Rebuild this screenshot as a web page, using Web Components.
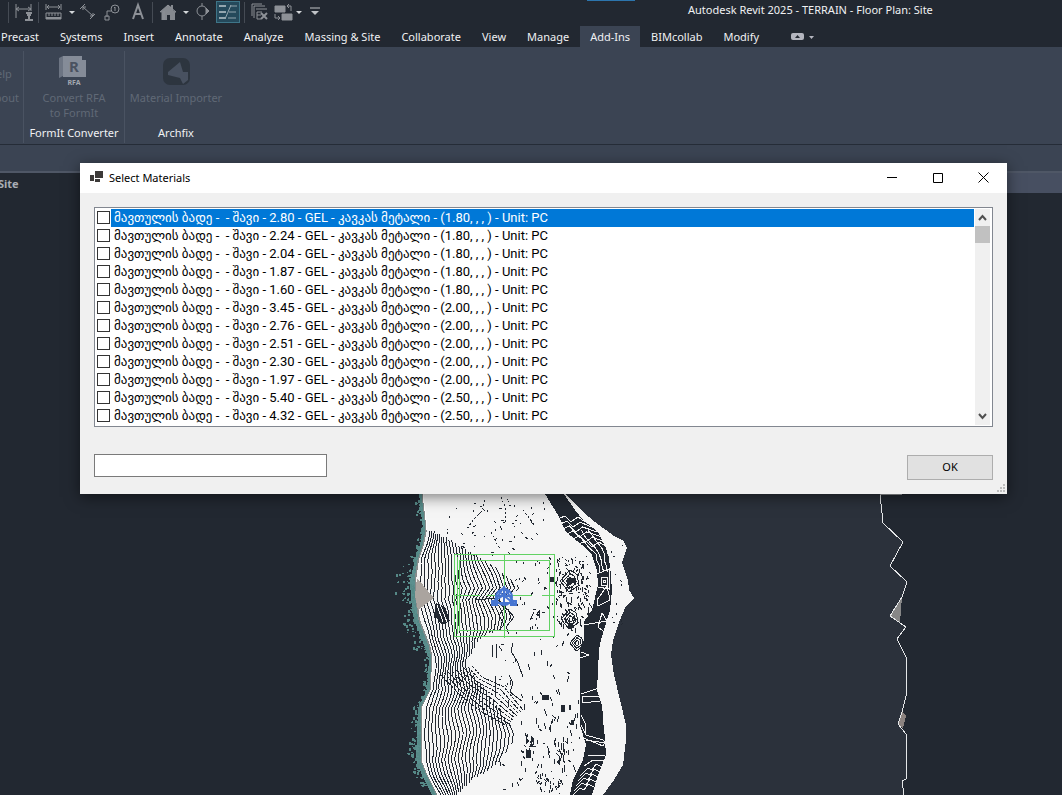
<!DOCTYPE html>
<html lang="en">
<head>
<meta charset="utf-8">
<title>Autodesk Revit 2025 - TERRAIN - Floor Plan: Site</title>
<style>
  html, body { height: 100%; margin: 0; }
  body {
    overflow: hidden;
    background: #222831;
    color: #f0f1f3;
    font: 11px/15px "Noto Sans", "DejaVu Sans", sans-serif;
  }
</style>
</head>
<body>
<revit-app></revit-app>

<script>
const icons = {
  alignedDim: '<path d="M2 2v14M17 2v7M2 7h15M5 5L2 7l3 2M14 5l3 2-3 2"/><path d="M12 11h6M15 11v6M13 13h4M11 18h8" stroke-width="2"/>',
  ruler: '<path d="M2 2v6M17 2v6M3 5h13M5 3L3 5l2 2M14 3l2 2-2 2"/><path d="M2 11h15v6H2zM5 11v3M8 11v3M11 11v3M14 11v3"/><path d="M2 16h15" stroke-width="2"/>',
  measure: '<path d="M5 5l10 9M2 7l5-5M12 17l5-5M5 5v3M5 5h3M15 14v-3M15 14h-3"/>',
  tag: '<circle cx="13" cy="7" r="4"/><path d="M9 9H5v6M3 14h4v4H3zM12 6l1-1v4"/>',
  text: '<path d="M5 17L10 3l5 14M7 12h6" stroke-width="2"/>',
  home: '<path d="M2 10l8-7 3 2V3h2v5l3 2-1 1v7h-5v-5H9v5H4v-7z" fill="#85898f" stroke="none"/><path d="M2 10l8-7 8 7M4 11v7M6 9v9"/>',
  section: '<circle cx="10" cy="9" r="5"/><path d="M10 1v3M10 14v4"/><path d="M14 6l3 3-3 3z" fill="#8d9197"/>',
  thinLines: '<path d="M1 4h7M1 10h7M1 16h7" stroke-width="2" stroke="#94a6af"/><path d="M12 4h7M11 10h7M10 16h8M13 3L7 17" stroke="#94a6af"/>',
  closeInactive: '<path d="M3 14V2h10M5 16V4h11M7 7h11M8 10h5M8 13h4M8 17h4M8 10v7"/><path d="M12 11l6 6M18 11l-6 6" stroke-width="2"/>',
  switchWindow: '<path d="M2 4h10v6H2zM9 12h10v6H9z" fill="#8d9197"/><path d="M14 4h4v5M16 2l-2 2 2 2M2 12v4h5M5 14l2 2-2 2"/>',
  caret: '<path d="M7 9h6l-3 3z" fill="#d4d7da" stroke="none"/>',
  menu: '<path d="M5 6h10" stroke="#c0c3c7"/><path d="M6 9h8l-4 4z" fill="#c0c3c7" stroke="none"/>'
};

class QuickButton extends HTMLElement {
  constructor() {
    super();
    this.attachShadow({ mode: 'open' });
  }

  connectedCallback() {
    const name = this.getAttribute('icon');
    this.shadowRoot.innerHTML = `
      <style>
        :host { display: flex; flex: 0 0 auto; width: 24px; }
        :host([wide]) { width: 28px; }
        :host([slim]) { width: 8px; }
        :host([active]) { margin: 0 2px; }
        button {
          display: flex; align-items: center; justify-content: center;
          width: 100%; height: 22px; padding: 0; border: 0;
          background: none; overflow: visible;
        }
        :host([active]) button { background: #25495b; border: 1px solid #3e7588; }
        svg { flex: 0 0 auto; width: 20px; height: 20px; fill: none; stroke: #8d9197; }
      </style>
      <button type="button" aria-label="${name}">
        <svg viewBox="0 0 20 20">${icons[name]}</svg>
      </button>
    `;
  }
}
customElements.define('quick-button', QuickButton);

class TitleBar extends HTMLElement {
  constructor() {
    super();
    this.attachShadow({ mode: 'open' });
    this.shadowRoot.innerHTML = `
      <style>
        :host { display: flex; height: 26px; background: #222831; }
        nav { display: flex; align-items: center; flex: 0 0 auto; height: 24px; padding-left: 8px; }
        hr { width: 1px; height: 21px; margin: 0 1px 0 0; border: 0; background: #454b54; }
        hr.wide { margin: 0 2px; }
        .search { width: 48px; height: 1px; margin-left: 260px; background: #2c75ad; }
        h1 { margin: 2px 0 0 53px; font: inherit; white-space: nowrap; }
      </style>
      <nav aria-label="Quick access">
        <hr>
        <quick-button icon="alignedDim" wide></quick-button>
        <hr>
        <quick-button icon="ruler" wide></quick-button>
        <quick-button icon="caret" slim></quick-button>
        <quick-button icon="measure"></quick-button>
        <quick-button icon="tag"></quick-button>
        <quick-button icon="text" wide></quick-button>
        <hr>
        <quick-button icon="home" wide></quick-button>
        <quick-button icon="caret" slim></quick-button>
        <quick-button icon="section"></quick-button>
        <quick-button icon="thinLines" active></quick-button>
        <hr class="wide">
        <quick-button icon="closeInactive"></quick-button>
        <quick-button icon="switchWindow"></quick-button>
        <quick-button icon="caret" slim></quick-button>
        <quick-button icon="menu"></quick-button>
      </nav>
      <div class="search"></div>
      <h1><slot></slot></h1>
    `;
  }
}
customElements.define('title-bar', TitleBar);

class RibbonTabs extends HTMLElement {
  constructor() {
    super();
    this.attachShadow({ mode: 'open' });
    this.tabs = ['Precast', 'Systems', 'Insert', 'Annotate', 'Analyze', 'Massing & Site',
      'Collaborate', 'View', 'Manage', 'Add-Ins', 'BIMcollab', 'Modify'];
  }

  connectedCallback() {
    this.shadowRoot.innerHTML = `
      <style>
        :host { display: flex; height: 21px; background: #222831; }
        nav { display: flex; gap: 1px; margin-left: -9px; }
        a {
          padding: 2px 10px; height: 17px; line-height: 17px;
          color: inherit; text-decoration: none; white-space: nowrap;
        }
        a.active { background: #3b4453; }
        button { display: flex; align-items: center; padding: 0; margin-left: 22px; border: 0; background: none; }
      </style>
      <nav></nav>
      <button type="button" aria-label="Minimize ribbon">
        <svg width="24" height="9" viewBox="0 0 24 9">
          <rect x="0" y="1" width="13" height="7" rx="2" fill="#b4b6bf"/>
          <path d="M4 6l2.500-3L9 6z" fill="#222831"/>
          <path d="M18 4h5l-2.500 3z" fill="#b4b6bf"/>
        </svg>
      </button>
    `;
    const nav = this.shadowRoot.querySelector('nav');
    this.tabs.forEach((tab) => {
      const link = document.createElement('a');
      link.href = '#';
      link.textContent = tab;
      if (tab === 'Add-Ins') link.className = 'active';
      nav.appendChild(link);
    });
  }
}
customElements.define('ribbon-tabs', RibbonTabs);

class RibbonPanel extends HTMLElement {
  constructor() {
    super();
    this.attachShadow({ mode: 'open' });
    this.shadowRoot.innerHTML = `
      <style>
        :host {
          display: flex; flex-direction: column; justify-content: space-between;
          flex: 0 0 auto; width: 100px; height: 92px; margin-top: 4px;
          border-right: 1px solid #4a5362; text-align: center;
        }
        :host([last]) { border: 0; width: 102px; }
        button {
          width: 100%; padding: 0; border: 0; background: none;
          color: #606976; font: inherit; line-height: 15px;
        }
        ::slotted(svg) { display: block; margin: 3px auto 4px; }
        footer { padding-bottom: 2px; line-height: 16px; white-space: nowrap; }
      </style>
      <button type="button" disabled><slot name="icon"></slot><slot></slot></button>
      <footer><slot name="title"></slot></footer>
    `;
  }
}
customElements.define('ribbon-panel', RibbonPanel);

class RibbonBar extends HTMLElement {
  constructor() {
    super();
    this.attachShadow({ mode: 'open' });
    this.shadowRoot.innerHTML = `
      <style>
        :host { display: flex; height: 97px; background: #3b4453; border-bottom: 1px solid #252c37; }
        .help {
          display: flex; justify-content: flex-end; width: 19px; height: 92px;
          margin-top: 4px; padding-right: 4px; overflow: hidden;
          border-right: 1px solid #4a5362; color: #606976;
        }
        ul { flex: 0 0 auto; list-style: none; margin: 0; padding: 11px 0 0; line-height: 24px; }
        svg { font-family: "Noto Sans", sans-serif; font-weight: 700; }
      </style>
      <div class="help"><ul><li>Help</li><li>About</li></ul></div>
      <ribbon-panel>
        <svg slot="icon" width="32" height="32" viewBox="0 0 32 32">
          <path d="M1 4l4-2v20l-4 2z" fill="#6d7583"/>
          <path d="M5 2h19v4h4v17H5z" fill="#858c98"/>
          <text x="16" y="18" text-anchor="middle" font-size="15" fill="#4a5260">R</text>
          <text x="16" y="31" text-anchor="middle" font-size="7" fill="#a2a7b0">RFA</text>
        </svg>Convert RFA<br>to FormIt<span slot="title">FormIt Converter</span>
      </ribbon-panel>
      <ribbon-panel last>
        <svg slot="icon" width="32" height="32" viewBox="0 0 32 32">
          <rect x="3" y="4" width="27" height="27" rx="7" fill="#2d353f"/>
          <path d="M20 8l3 10h5v8l-5 4-3-6-12-3v-3z" fill="#485160"/>
        </svg>Material Importer<span slot="title">Archfix</span>
      </ribbon-panel>
    `;
  }
}
customElements.define('ribbon-bar', RibbonBar);

// site plan view: terrain surface, contour lines and the property line on the right
const westEdge = [[494, 423], [520, 426], [530, 427], [545, 424], [560, 419], [580, 416], [600, 417],
  [620, 420], [635, 426], [645, 430], [658, 433], [690, 431], [708, 422], [760, 422], [775, 428], [795, 438]];
const slopeEdge = [[528, 428], [538, 450], [550, 468], [560, 486], [575, 507], [588, 522], [600, 500],
  [608, 508], [617, 513], [630, 500], [640, 478], [652, 474], [663, 466], [680, 478], [700, 495],
  [716, 505], [733, 518], [748, 510], [765, 497], [780, 474], [795, 458]];
const bandWest = [[494, 545], [515, 558], [532, 566], [545, 582], [555, 592], [570, 597], [585, 598],
  [610, 592], [622, 584], [640, 584], [650, 580], [725, 580], [745, 586], [760, 583], [780, 573], [795, 570]];
const bandEast = [[494, 564], [510, 575], [520, 583], [532, 598], [548, 606], [565, 610], [590, 612],
  [610, 610], [640, 601], [650, 599], [690, 597], [705, 602], [740, 605], [755, 606], [775, 598], [795, 592]];
const eastEdge = [[494, 565], [512, 583], [522, 595], [536, 614], [541, 624], [548, 627], [562, 622],
  [580, 628], [590, 629], [598, 634], [608, 625], [620, 620], [640, 613], [655, 611], [675, 614],
  [700, 620], [725, 626], [740, 626], [765, 623], [780, 614], [795, 603]];
const siteLine = [[494, 880], [523, 883], [542, 903], [566, 890], [581, 906], [585, 906], [597, 902],
  [616, 890], [627, 906], [639, 897], [657, 906], [696, 906], [712, 902], [724, 898], [734, 906],
  [779, 906], [781, 902], [795, 904]];

function xAt(edge, y) {
  for (let i = 1; i < edge.length; i++) {
    const [y0, x0] = edge[i - 1];
    const [y1, x1] = edge[i];
    if (y <= y1) return x0 + (x1 - x0) * Math.max(0, y - y0) / (y1 - y0);
  }
  return edge[edge.length - 1][1];
}

function toPoints(edge) {
  return edge.map(([y, x]) => `${x},${y}`).join(' ');
}

class SiteView extends HTMLElement {
  constructor() {
    super();
    this.attachShadow({ mode: 'open' });
    this.seed = 7;
  }

  random() {
    this.seed = (this.seed * 16807) % 2147483647;
    return this.seed / 2147483647;
  }

  between(a, b) {
    return Math.round(a + this.random() * (b - a));
  }

  area(west, east) {
    return `${toPoints(west)} ${toPoints([...east].reverse())}`;
  }

  slopeLines() {
    let d = '';
    for (let i = 1; i <= 34; i++) {
      let pen = 'M';
      for (let y = 528; y <= 795; y += 3) {
        const west = xAt(westEdge, y);
        const east = xAt(slopeEdge, y);
        const step = 2 + (east - west) / 58;
        const x = west + i * step + Math.sin(y / 7 + i / 3);
        if (x > east) {
          pen = 'M';
        } else {
          d += `${pen}${x.toFixed(1)} ${y}`;
          pen = 'L';
        }
      }
    }
    return d;
  }

  // steep gully east of the lower slope
  gullyLines() {
    let d = '';
    for (let i = 0; i < 9; i++) {
      d += `M${440 + i * 4} ${674 - i}L${458 + i * 3} ${693 - i * 2}L${480 + i * 3} ${711 - i * 3}L${507 + i * 2} ${726 - i * 2}`;
    }
    return d;
  }

  marks(count, x0, x1, y0, y1, length) {
    let d = '';
    for (let i = 0; i < count; i++) {
      d += `M${this.between(x0, x1)} ${this.between(y0, y1)}l${this.between(-2, 3)} ${this.between(1, length)}`;
    }
    return d;
  }

  knoll(x, y, w, h, rings) {
    let d = '';
    for (let i = 1; i <= rings; i++) {
      const rx = w * i / rings;
      const ry = h * i / rings;
      d += `M${x - rx} ${y}l${rx} ${-ry}l${rx * 0.7} ${ry * 0.4}l${rx * 0.2} ${ry}l${-rx} ${ry * 0.6}z`;
    }
    return d;
  }

  bandLines() {
    let d = '';
    for (let y = 519; y < 545; y += 5) {
      const west = xAt(bandWest, y);
      const east = xAt(bandEast, y);
      d += `M${west - 2} ${y}l7 -3l6 6l7 -5l${east - west - 15} 5`;
    }
    for (let i = 1; i < 4; i++) {
      let pen = 'M';
      for (let y = 530; y < 576; y += 6) {
        const west = xAt(bandWest, y);
        const east = xAt(bandEast, y);
        d += `${pen}${(west + (east - west) * i / 4 + this.between(-1, 1)).toFixed(1)} ${y}`;
        pen = 'L';
      }
    }
    d += 'M601 577h6v8h-6zM603 580h2v2h-2zM597 574l12 -5v20l-11 -2M597 600l10 -14l3 14l-12 6zM583 625l24 -4l-5 -8l-4 14l9 7';
    d += 'M581 652l8 3l-9 3M581 694l18 -6v9l-17 -1v7l18 -2M581 725l5 10l17 5l4 5M581 737l22 9l3 -7M588 755h17M584 766l9 -6h11';
    d += 'M603 700v22l3 8M581 715l4 8v10M586 740l19 3';
    for (let i = 0; i < 5; i++) {
      d += `M${580 - i * 2} ${776 + i * 5}l8 -8l4 2l4 -6l6 3`;
    }
    return d;
  }

  shore() {
    let d = '';
    for (let i = 0; i < 430; i++) {
      const y = this.between(500, 794);
      const wide = y > 555 && y < 650 ? 20 : y > 720 ? 13 : 8;
      const reach = Math.floor(this.random() * this.random() * wide);
      d += `M${Math.round(xAt(westEdge, y)) - 3 - reach} ${y}h${this.between(1, 3)}v${this.between(1, 3)}h-2z`;
    }
    return d;
  }

  connectedCallback() {
    const shoreEdge = westEdge.map(([y, x]) => [y, x - (y > 570 && y < 650 || y > 730 ? 6 : 4)]);
    this.shadowRoot.innerHTML = `
      <style>
        :host { display: block; overflow: hidden; background: #222831; }
        svg { display: block; width: 100%; height: 100%; fill: none; }
      </style>
      <svg viewBox="0 193 1062 602" preserveAspectRatio="xMidYMin slice" shape-rendering="crispEdges" role="img" aria-label="Terrain plan">
        <polygon points="${this.area(eastEdge, siteLine)}" fill="#2b313b"/>
        <polygon points="${this.area(shoreEdge, westEdge)}" fill="#5b8f8e"/>
        <path d="${this.shore()}" fill="#568987"/>
        <polyline points="${toPoints(westEdge)}" stroke="#858b8b" stroke-width="3"/>
        <polygon points="${this.area(westEdge, eastEdge)}" fill="#f5f5f5"/>
        <polygon points="${this.area(bandWest, bandEast)}" fill="#222831"/>
        <g stroke="#222831">
          <path d="${this.slopeLines()}"/>
          <path d="${this.gullyLines()}" stroke-dasharray="3 1"/>
          <path d="${this.marks(60, 445, 545, 496, 555, 2)}"/>
          <path d="${this.marks(50, 515, 575, 555, 640, 3)}"/>
          <path d="${this.marks(150, 556, 590, 556, 630, 5)}"/>
          <path d="${this.marks(22, 490, 574, 640, 690, 6)}"/>
          <path d="${this.marks(60, 520, 579, 690, 765, 7)}"/>
          <path d="${this.marks(18, 495, 570, 760, 793, 5)}"/>
          <path d="${this.marks(16, 606, 625, 540, 625, 2)}"/>
          <path d="${this.knoll(570, 581, 10, 11, 3)}${this.knoll(570, 619, 9, 10, 3)}${this.knoll(577, 643, 7, 8, 3)}"/>
          <path d="${this.marks(16, 531, 543, 610, 618, 4)}${this.marks(16, 523, 533, 736, 752, 5)}${this.marks(22, 546, 562, 778, 790, 4)}${this.marks(14, 537, 545, 770, 782, 4)}${this.marks(20, 555, 570, 735, 760, 6)}"/>
          <path d="M485 500l-4 12l-8 8l-6 9M501 497l4 10l1 16M491 532l5 10l4 7M523 510l7 9l4 6" stroke-dasharray="2 2"/>
          <path d="M492 645v12M496 644v14M513 643l-2 8l7 12l5 14M495 676v20M509 675l4 8l-3 9l12 9M508 700v7"/>
          <path d="M475 600l20 -2l11 8l-7 9l5 10l-6 6M500 604l8 6l6 7l-8 10l3 7"/>
        </g>
        <path d="M542 695h7v5h-7zM561 705h4v7h-4zM526 750h5v8h-5zM550 577h4v5h-4zM569 705h2v5h-2zM571 720h3v5h-3zM567 578h8v5h-8zM568 623h5v5h-5zM436 603l9 4 5 14-8 4-8-10z" fill="#222831"/>
        <path d="M437 605l6 17M440 604l7 18" stroke="#f5f5f5"/>
        <path d="${this.bandLines()}" stroke="#f5f5f5"/>
        <polygon points="417,578 434,598 418,610 415,596" fill="#aaa49f"/>
        <polyline points="423,494 426,520 427,530" stroke="#fff"/>
        <polyline points="433,655 431,690 422,708 422,760 428,775 438,795" stroke="#fff"/>
        <g stroke="#62d263">
          <path d="M454.500 554.500h100v82h-100zM459.500 560.500h90v70h-90z"/>
          <path d="M504.500 554v84M454 595.500h26M487 595.500h45M542 595.500h13M457.500 557v77"/>
        </g>
        <g stroke="#4675d1" stroke-width="2" shape-rendering="auto">
          <path d="M504 587l10 16h-21zM504 588v17M496 600l14-9M498 591l14 11M495 596h17"/>
          <circle cx="504" cy="597" r="8"/>
          <path d="M492 601h5v4h-5zM511 601h5v4h-5z"/>
        </g>
        <polygon points="902,597 890,616 900,622" fill="#878787"/>
        <polygon points="902,712 906,716 903,728 898,724" fill="#8b827f"/>
        <polyline points="${toPoints(siteLine)}" stroke="#e4e6e8"/>
        <path d="M880 494.500h22" stroke="#9a9da0"/>
      </svg>
    `;
  }
}
customElements.define('site-view', SiteView);

class MaterialItem extends HTMLElement {
  constructor() {
    super();
    this.attachShadow({ mode: 'open' });
    this.shadowRoot.innerHTML = `
      <style>
        :host { display: block; height: 18px; }
        label { display: flex; align-items: center; height: 18px; }
        input {
          appearance: none; flex: 0 0 auto; width: 13px; height: 13px; margin: 0 1px 2px;
          border: 1px solid #333; background: #fff;
        }
        input:checked { background: #0078d7; }
        span {
          flex: 1; padding-left: 3px; white-space: pre;
          font: 13px/18px Roboto, "DejaVu Sans", sans-serif;
        }
        :host([selected]) span { background: #0078d7; color: #fff; }
      </style>
      <label><input type="checkbox"><span><slot></slot></span></label>
    `;
  }
}
customElements.define('material-item', MaterialItem);

class MaterialList extends HTMLElement {
  constructor() {
    super();
    this.attachShadow({ mode: 'open' });
    this.materials = [
      ['2.80', '1.80'], ['2.24', '1.80'], ['2.04', '1.80'], ['1.87', '1.80'],
      ['1.60', '1.80'], ['3.45', '2.00'], ['2.76', '2.00'], ['2.51', '2.00'],
      ['2.30', '2.00'], ['1.97', '2.00'], ['5.40', '2.50'], ['4.32', '2.50']
    ];

    this.shadowRoot.innerHTML = `
      <style>
        :host {
          display: flex; gap: 1px; padding: 1px; background: #fff;
          border: 1px solid #828790;
        }
        #items { flex: 1; min-width: 0; overflow: hidden; }
        .scroll { display: flex; flex-direction: column; width: 15px; margin-right: 1px; background: #f0f0f0; }
        .track { flex: 1; }
        .thumb { height: 17px; background: #c1c1c1; }
        button { display: flex; align-items: center; justify-content: center; height: 17px; padding: 0; border: 0; background: none; }
        svg { fill: none; stroke: #505050; stroke-width: 2; }
      </style>
      <div id="items"></div>
      <div class="scroll">
        <button type="button" aria-label="Scroll up"><svg width="9" height="7" viewBox="0 0 9 7"><path d="M1 6l3.500-4L8 6"/></svg></button>
        <div class="track"><div class="thumb"></div></div>
        <button type="button" aria-label="Scroll down"><svg width="9" height="7" viewBox="0 0 9 7"><path d="M1 1l3.500 4L8 1"/></svg></button>
      </div>
    `;
  }

  connectedCallback() {
    this.render();
  }

  render() {
    const items = this.shadowRoot.querySelector('#items');
    items.innerHTML = '';

    this.materials.forEach(([price, size], index) => {
      const item = document.createElement('material-item');
      item.textContent = `მავთულის ბადე -  - შავი - ${price} - GEL - კავკას მეტალი - (${size}, , , ) - Unit: PC`;
      if (index === 0) item.setAttribute('selected', '');
      items.appendChild(item);
    });
  }
}
customElements.define('material-list', MaterialList);

class MaterialDialog extends HTMLElement {
  constructor() {
    super();
    this.attachShadow({ mode: 'open' });
    this.shadowRoot.innerHTML = `
      <style>
        :host {
          display: flex; flex-direction: column; position: relative;
          background: #f0f0f0; color: #000; box-shadow: 0 3px 14px rgba(0, 0, 0, 0.5);
        }
        header { display: flex; align-items: center; height: 28px; padding: 0 1px 2px 10px; background: #fff; }
        h2 { flex: 1; margin: 0 0 0 6px; font: inherit; }
        header button { width: 46px; height: 28px; padding: 0; border: 0; background: none; }
        header button svg { display: block; margin: auto; fill: none; stroke: #000; }
        .body { padding: 14px; }
        material-list { height: 216px; }
        .actions { display: flex; justify-content: space-between; align-items: flex-start; padding-top: 27px; }
        input {
          box-sizing: border-box; width: 233px; height: 23px; padding: 2px 4px;
          border: 1px solid #7a7a7a; background: #fff; font: inherit;
        }
        .ok {
          width: 86px; height: 25px; margin-top: 1px; padding: 0 0 2px;
          border: 1px solid #adadad; background: #e1e1e1; color: #000;
          font: inherit;
        }
        .grip { position: absolute; right: 2px; bottom: 2px; fill: #bdbdbd; }
      </style>
      <header>
        <svg width="13" height="13" viewBox="0 0 13 13" fill="#3c3a39">
          <path d="M0 4h4v6H0zM5 0h8v7H5zM5 8h5v3H5z"/>
        </svg>
        <h2><slot></slot></h2>
        <button type="button" aria-label="Minimize"><svg width="11" height="11"><path d="M1 5.500h10"/></svg></button>
        <button type="button" aria-label="Maximize"><svg width="11" height="11"><path d="M1.500 1.500h9v9h-9z"/></svg></button>
        <button type="button" aria-label="Close"><svg width="11" height="11"><path d="M0.500 0.500l10 10M10.500 0.500l-10 10"/></svg></button>
      </header>
      <div class="body">
        <material-list></material-list>
        <div class="actions">
          <input type="text" aria-label="Search materials">
          <button class="ok" type="button">OK</button>
        </div>
      </div>
      <svg class="grip" width="8" height="8" viewBox="0 0 8 8">
        <path d="M6 0h2v2H6zM3 3h2v2H3zM6 3h2v2H6zM0 6h2v2H0zM3 6h2v2H3zM6 6h2v2H6z"/>
      </svg>
    `;
  }
}
customElements.define('material-dialog', MaterialDialog);

class RevitApp extends HTMLElement {
  constructor() {
    super();
    this.attachShadow({ mode: 'open' });
    this.shadowRoot.innerHTML = `
      <style>
        :host { display: flex; flex-direction: column; height: 100%; position: relative; }
        .options { height: 26px; background: #3b4453; border-bottom: 2px solid #4f5766; }
        .views { display: flex; height: 20px; background: #474f61; }
        .views a {
          width: 240px; padding-top: 3px; background: #222831; color: #a9adb4;
          font-weight: 700; text-decoration: none;
        }
        .views span { margin-left: -2px; }
        site-view { flex: 1; min-height: 0; }
        material-dialog { position: absolute; top: 163px; left: 80px; right: 55px; }
      </style>
      <title-bar>Autodesk Revit 2025 - TERRAIN - Floor Plan: Site</title-bar>
      <ribbon-tabs></ribbon-tabs>
      <ribbon-bar></ribbon-bar>
      <div class="options"></div>
      <div class="views"><a href="#"><span>Site</span></a></div>
      <site-view></site-view>
      <material-dialog>Select Materials</material-dialog>
    `;
  }
}
customElements.define('revit-app', RevitApp);
</script>
</body>
</html>
